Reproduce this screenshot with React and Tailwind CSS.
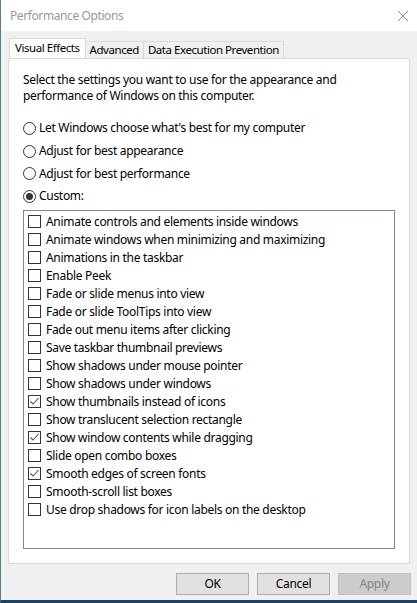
const items = [
  ["Animate controls and elements inside windows", false],
  ["Animate windows when minimizing and maximizing", false],
  ["Animations in the taskbar", false],
  ["Enable Peek", false],
  ["Fade or slide menus into view", false],
  ["Fade or slide ToolTips into view", false],
  ["Fade out menu items after clicking", false],
  ["Save taskbar thumbnail previews", false],
  ["Show shadows under mouse pointer", false],
  ["Show shadows under windows", false],
  ["Show thumbnails instead of icons", true],
  ["Show translucent selection rectangle", false],
  ["Show window contents while dragging", true],
  ["Slide open combo boxes", false],
  ["Smooth edges of screen fonts", true],
  ["Smooth-scroll list boxes", false],
  ["Use drop shadows for icon labels on the desktop", false],
];

const radios = [
  ["Let Windows choose what's best for my computer", false],
  ["Adjust for best appearance", false],
  ["Adjust for best performance", false],
  ["Custom:", true],
];

const Radio = ({ label, checked }) => (
  <div className="flex items-center h-[22.7px]">
    <span className="w-[13px] h-[13px] rounded-full border border-[#333] bg-white flex items-center justify-center">
      {checked && <span className="w-[7px] h-[7px] rounded-full bg-[#333]" />}
    </span>
    <span className="ml-[3px] text-[#000]">{label}</span>
  </div>
);

const Check = ({ label, checked }) => (
  <div className="flex items-center h-[18px]">
    <span className="w-[13px] h-[13px] border border-[#333] bg-white flex items-center justify-center">
      {checked && (
        <svg width="11" height="11" viewBox="0 0 11 11">
          <path d="M1.5 5.5 L4 8 L9.5 2" fill="none" stroke="#555" strokeWidth="1.1" />
        </svg>
      )}
    </span>
    <span className="ml-[5px] text-black">{label}</span>
  </div>
);

const Tab = ({ label, active }) =>
  active ? (
    <div className="h-[20px] px-[5px] pt-[1px] bg-white border border-b-0 border-[#d9d9d9] relative z-10 -mb-px">
      {label}
    </div>
  ) : (
    <div className="h-[17px] mt-[3px] px-[4px] bg-[#f0f0f0] border border-b-0 border-[#d9d9d9] -ml-px leading-[16px]">
      {label}
    </div>
  );

const Button = ({ label, disabled }) => (
  <div
    className={
      disabled
        ? "w-[73px] h-[22px] flex items-center justify-center bg-[#cccccc] border border-[#bfbfbf] text-[#838383]"
        : "w-[73px] h-[22px] flex items-center justify-center bg-[#e1e1e1] border border-[#adadad] text-black"
    }
  >
    {label}
  </div>
);

export default function App() {
  return (
    <div
      className="w-[417px] h-[603px] bg-[#f0f0f0] flex flex-col border-l border-[#5a7a99] border-b-[3px] border-b-[#1e4266] text-[12px] leading-[16px] tracking-[-0.3px]"
      style={{ fontFamily: '"Noto Sans", "Open Sans", sans-serif' }}
    >
      <div className="h-[31px] bg-white flex items-center justify-between pl-[9px] pr-[7px] shrink-0">
        <span className="text-[#999] tracking-[-0.4px]">Performance Options</span>
        <svg width="12" height="12" viewBox="0 0 12 12" className="mr-[1px]">
          <path d="M1 1 L11 11 M11 1 L1 11" stroke="#888" strokeWidth="1" />
        </svg>
      </div>
      <div className="flex flex-col px-[7px] pt-[7px]">
        <div className="flex items-start pl-px text-[11.5px] tracking-[-0.45px]">
          <Tab label="Visual Effects" active />
          <Tab label="Advanced" />
          <Tab label="Data Execution Prevention" />
        </div>
        <div className="h-[506px] bg-white border border-[#d9d9d9] px-[14px] pt-[13px]">
          <p className="leading-[16px]">
            Select the settings you want to use for the appearance and
            <br />
            performance of Windows on this computer.
          </p>
          <div className="mt-[13px] flex flex-col">
            {radios.map(([l, c]) => (
              <Radio key={l} label={l} checked={c} />
            ))}
          </div>
          <div className="mt-[2px] h-[339px] border border-[#828790] pl-[4px] pt-[2px]">
            {items.map(([l, c]) => (
              <Check key={l} label={l} checked={c} />
            ))}
          </div>
        </div>
        <div className="flex justify-end gap-[8px] mt-[9px] -mr-px">
          <Button label="OK" />
          <Button label="Cancel" />
          <Button label="Apply" disabled />
        </div>
      </div>
    </div>
  );
}
